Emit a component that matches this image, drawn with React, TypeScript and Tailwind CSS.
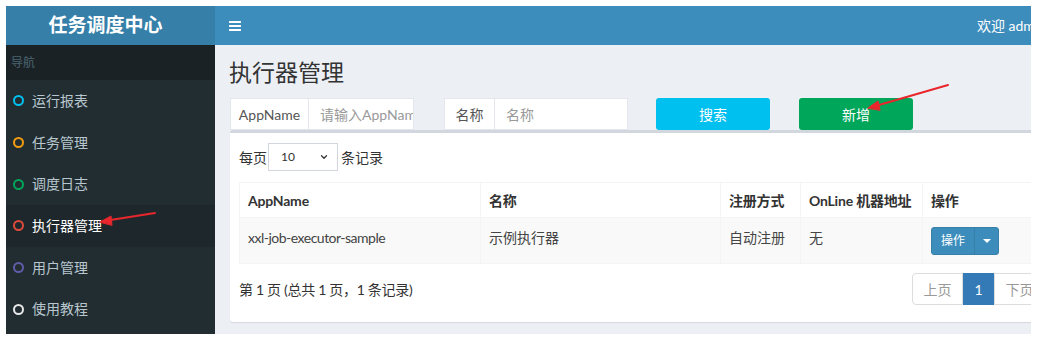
const menu = [
    { label: "运行报表", ring: "border-[#00c0ef]" },
    { label: "任务管理", ring: "border-[#f39c12]" },
    { label: "调度日志", ring: "border-[#00a65a]" },
    { label: "执行器管理", ring: "border-[#dd4b39]", active: true },
    { label: "用户管理", ring: "border-[#605ca8]" },
    { label: "使用教程", ring: "border-[#e8e8e8]" },
];

const columns = [
    { title: "AppName", width: "w-[241px]" },
    { title: "名称", width: "w-[240px]" },
    { title: "注册方式", width: "w-[80px]" },
    { title: "OnLine 机器地址", width: "w-[122px]" },
    { title: "操作", width: "w-[123px]" },
];

const Sidebar = () => (
    <aside className="flex w-[209px] shrink-0 flex-col bg-[#222d32]">
        <div className="flex h-[35px] shrink-0 items-center bg-[#1a2226] pl-[5px] text-[12px] text-[#4b646f]">
            导航
        </div>
        {menu.map((item) => (
            <div
                key={item.label}
                className={
                    item.active
                        ? "flex h-[41.7px] shrink-0 items-center bg-[#1e282c] pl-[7px] text-[14px] text-white"
                        : "flex h-[41.7px] shrink-0 items-center pl-[7px] text-[14px] text-[#b8c7ce]"
                }
            >
                <span className={`h-[11px] w-[11px] rounded-full border-2 ${item.ring}`} />
                <span className="ml-[8px] leading-[18px]">{item.label}</span>
            </div>
        ))}
    </aside>
);

const SearchBar = () => (
    <div className="mt-[13px] flex h-[32px] items-stretch pl-[15px] text-[14px]">
        <div className="flex w-[184px] border border-[#e3e6ea] bg-white">
            <span className="flex w-[78px] items-center justify-center border-r border-[#e3e6ea] text-[#555]">
                AppName
            </span>
            <span className="flex flex-1 items-center overflow-hidden whitespace-nowrap pl-[11px] text-[#999]">
                请输入AppName
            </span>
        </div>
        <div className="ml-[30px] flex w-[184px] border border-[#e3e6ea] bg-white">
            <span className="flex w-[50px] items-center justify-center border-r border-[#e3e6ea] text-[#555]">
                名称
            </span>
            <span className="flex flex-1 items-center pl-[11px] text-[#999]">名称</span>
        </div>
        <button className="ml-[28px] w-[114px] rounded-[3px] bg-[#00c0ef] text-white">搜索</button>
        <button className="ml-[29px] w-[114px] rounded-[3px] bg-[#00a65a] text-white">新增</button>
    </div>
);

const Box = () => (
    <div className="ml-[15px] w-[824px] rounded-[3px] border-t-[3px] border-[#d2d6de] bg-white px-[9px] pb-[17px] pt-[10px] text-[14px] text-[#333] shadow-[0_1px_1px_rgba(0,0,0,0.1)]">
        <div className="flex h-[28px] items-center">
            <span>每页</span>
            <div className="ml-[1px] flex h-[28px] w-[70px] items-center justify-between border border-[#d2d6de] pl-[12px] pr-[8px] text-[12px]">
                <span>10</span>
                <svg width="10" height="10" viewBox="0 0 24 24" fill="none" stroke="#333" strokeWidth="3" strokeLinecap="round" strokeLinejoin="round">
                    <path d="m6 9 6 6 6-6" />
                </svg>
            </div>
            <span className="ml-[3px]">条记录</span>
        </div>

        <table className="mt-[11px] w-[806px] table-fixed border-collapse">
            <thead>
                <tr>
                    {columns.map((col) => (
                        <th
                            key={col.title}
                            className={`${col.width} h-[35px] border border-[#f4f4f4] px-[8px] text-left font-bold tracking-[-0.2px]`}
                        >
                            {col.title}
                        </th>
                    ))}
                </tr>
            </thead>
            <tbody>
                <tr className="bg-[#f9f9f9] align-top">
                    <td className="h-[46px] border border-[#f4f4f4] px-[8px] pt-[9px] tracking-[-0.5px] text-[#444]">xxl-job-executor-sample</td>
                    <td className="border border-[#f4f4f4] px-[8px] pt-[9px] text-[#444]">示例执行器</td>
                    <td className="border border-[#f4f4f4] px-[8px] pt-[9px] text-[#444]">自动注册</td>
                    <td className="border border-[#f4f4f4] px-[8px] pt-[9px] text-[#444]">无</td>
                    <td className="border border-[#f4f4f4] px-[8px] pt-[9px]">
                        <div className="flex h-[28px] w-[68px] overflow-hidden rounded-[3px] border border-[#367fa9] bg-[#3c8dbc] text-[12px] text-white">
                            <span className="flex w-[43px] items-center justify-center border-r border-[#367fa9]">操作</span>
                            <span className="flex flex-1 items-center justify-center">
                                <span className="border-x-[4px] border-t-[4px] border-x-transparent border-t-white" />
                            </span>
                        </div>
                    </td>
                </tr>
            </tbody>
        </table>

        <div className="mt-[9px] flex items-center justify-between">
            <span className="tracking-[-0.3px]">第 1 页 (总共 1 页，1 条记录)</span>
            <div className="flex h-[32px] text-[14px]">
                <span className="flex w-[51px] items-center justify-center rounded-l-[4px] border border-[#ddd] text-[#999]">上页</span>
                <span className="flex w-[31px] items-center justify-center border border-[#337ab7] bg-[#337ab7] text-white">1</span>
                <span className="flex w-[51px] items-center justify-center rounded-r-[4px] border border-[#ddd] text-[#999]">下页</span>
            </div>
        </div>
    </div>
);

const Arrows = () => (
    <svg className="pointer-events-none absolute left-0 top-0" width="1039" height="341">
        <g stroke="#e8262b" strokeWidth="2" strokeLinecap="round" fill="#e8262b">
            <line x1="155" y1="213" x2="104" y2="221" />
            <path d="M100 222 L111 216 L112 225 Z" strokeWidth="1" />
            <line x1="948" y1="85" x2="872" y2="107" />
            <path d="M868 108 L878 101 L880 110 Z" strokeWidth="1" />
        </g>
    </svg>
);

export default function App() {
    return (
        <div className="relative h-[341px] w-[1039px] overflow-hidden bg-white pl-[6px] pt-[6px] font-['Lato','Noto_Sans_CJK_SC',sans-serif]">
            <div className="h-[328px] w-[1025px] overflow-hidden">
                <div className="flex h-full w-[1063px] flex-col">
                    <header className="flex h-[39px] shrink-0">
                        <div className="flex w-[209px] items-center justify-center bg-[#367fa9] pr-[10px] text-[19px] font-bold text-white">
                            任务调度中心
                        </div>
                        <div className="flex flex-1 items-center bg-[#3c8dbc] text-white">
                            <svg className="ml-[14px]" width="12" height="10" viewBox="0 0 12 10" fill="white">
                                <rect x="0" y="0" width="12" height="2" rx="0.5" />
                                <rect x="0" y="4" width="12" height="2" rx="0.5" />
                                <rect x="0" y="8" width="12" height="2" rx="0.5" />
                            </svg>
                            <span className="ml-auto pr-[23px] text-[14px]">欢迎 admin</span>
                        </div>
                    </header>
                    <div className="flex flex-1">
                        <Sidebar />
                        <main className="flex-1 bg-[#ecf0f5]">
                            <h1 className="pl-[14px] pt-[14px] text-[23px] leading-[26px] text-[#333]">执行器管理</h1>
                            <SearchBar />
                            <Box />
                        </main>
                    </div>
                </div>
            </div>
            <Arrows />
        </div>
    );
}
